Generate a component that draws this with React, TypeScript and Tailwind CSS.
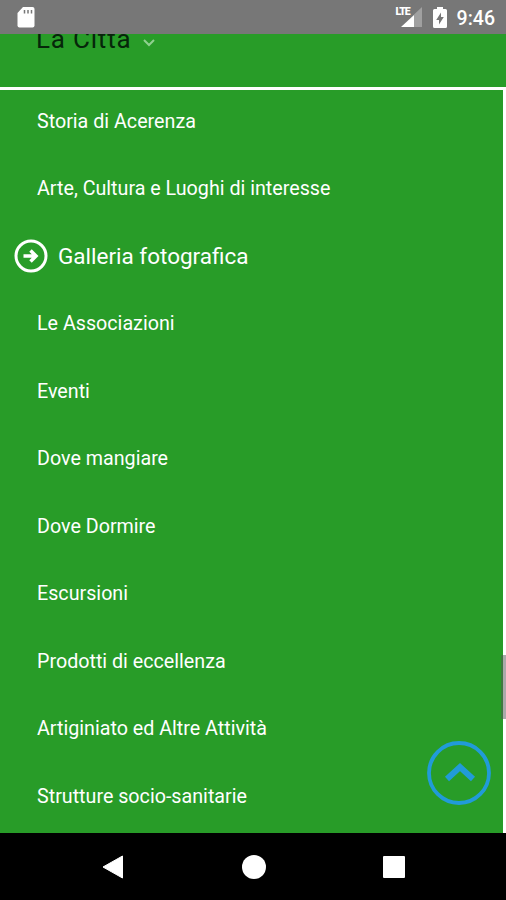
const items = [
  { title: 'Storia di Acerenza' },
  { title: 'Arte, Cultura e Luoghi di interesse' },
  { title: 'Galleria fotografica', active: true },
  { title: 'Le Associazioni' },
  { title: 'Eventi' },
  { title: 'Dove mangiare' },
  { title: 'Dove Dormire' },
  { title: 'Escursioni' },
  { title: 'Prodotti di eccellenza' },
  { title: 'Artiginiato ed Altre Attività' },
  { title: 'Strutture socio-sanitarie' },
];

function StatusBar() {
  return (
    <header className="h-[34px] shrink-0 bg-[#777777] flex items-start justify-between pl-[17px] pr-[11px] text-white">
      <svg className="mt-[7px]" width="18" height="21" viewBox="0 0 18 21">
        <path d="M6 0h9.500a2 2 0 0 1 2 2v16.500a2 2 0 0 1-2 2h-13a2 2 0 0 1-2-2V6z" fill="#fff" />
        <path d="M7.500 3v3.500M11 3v3.500M14.500 3v3.500" stroke="#777" strokeWidth="1.500" />
      </svg>
      <div className="flex items-start">
        <div className="relative w-[27px] h-[34px]">
          <span className="absolute left-0 top-[7px] text-[10.500px] leading-[10px] font-black tracking-[-1px]">LTE</span>
          <svg className="absolute left-[5px] top-[7px]" width="21" height="20" viewBox="0 0 21 20">
            <path d="M21 0v20H13V7.600z" fill="#fff" fillOpacity="0.3" />
            <path d="M13 8v12H0z" fill="#fff" />
          </svg>
        </div>
        <svg className="mt-[7px] ml-[10px]" width="14" height="21" viewBox="0 0 14 21">
          <path d="M4 0h6v2h2.500a1.500 1.500 0 0 1 1.500 1.500v16a1.500 1.500 0 0 1-1.500 1.500h-11A1.500 1.500 0 0 1 0 19.500v-16A1.500 1.500 0 0 1 1.500 2H4z" fill="#fff" />
          <path d="M8 5.500v4.500h2.800L6 17.500V13H3.200z" fill="#777" />
        </svg>
        <span className="ml-[10px] mt-[7px] text-[19.500px] leading-6 font-medium">9:46</span>
      </div>
    </header>
  );
}

function NavBar() {
  return (
    <nav className="h-[67px] shrink-0 bg-black flex items-center justify-between pl-[102px] pr-[101px]">
      <svg width="22" height="24" viewBox="0 0 22 24">
        <path d="M20.500 1v22L1 12z" fill="#fff" stroke="#fff" strokeLinejoin="round" />
      </svg>
      <div className="size-6 rounded-full bg-white" />
      <div className="size-[22px] rounded-[1px] bg-white" />
    </nav>
  );
}

export default function App() {
  return (
    <div className="relative w-[506px] h-[900px] overflow-hidden bg-[#289c28] flex flex-col font-['Roboto',sans-serif]">
      <StatusBar />
      {/* page title, partly scrolled under the status bar */}
      <div className="h-[53px] shrink-0 overflow-hidden flex items-start pl-[36px]">
        <span className="-mt-[10px] text-[26px] leading-[30px] tracking-[0.8px] text-[#06260a]">La Città</span>
        <svg className="mt-[5px] ml-3" width="12" height="8" viewBox="0 0 12 8">
          <path d="M1 1l5 5 5-5" fill="none" stroke="#8fd08f" strokeWidth="2" />
        </svg>
      </div>
      <main className="flex-1 min-h-0 overflow-hidden border-t-[3px] border-r-[3px] border-white">
        <ul className="-mt-[3px]">
          {items.map((item) => (
            <li key={item.title} className="h-[67.5px] flex items-center text-white">
              {item.active ? (
                <>
                  <svg className="ml-[14px] mr-[10px]" width="34" height="34" viewBox="0 0 34 34" fill="none" stroke="#fff">
                    <circle cx="17" cy="17" r="15" strokeWidth="3" />
                    <path d="M9.500 17h12M16.500 11.500l5.500 5.500-5.500 5.500" strokeWidth="3.500" />
                  </svg>
                  <span className="pt-[1.600px] text-[22.500px]">{item.title}</span>
                </>
              ) : (
                <span className="ml-[37px] pt-[1.600px] text-[19.700px]">{item.title}</span>
              )}
            </li>
          ))}
        </ul>
      </main>
      <NavBar />
      {/* scrollbar thumb */}
      <div className="absolute right-0 top-[655px] w-[5px] h-[64px] bg-[#555555]/50" />
      <button className="absolute left-[427px] top-[741px]">
        <svg width="64" height="64" viewBox="0 0 64 64" fill="none" stroke="#219bd8">
          <circle cx="32" cy="32" r="30" strokeWidth="3.800" />
          <path d="M20 38L33 26 46 38" strokeWidth="6" />
        </svg>
      </button>
    </div>
  );
}
